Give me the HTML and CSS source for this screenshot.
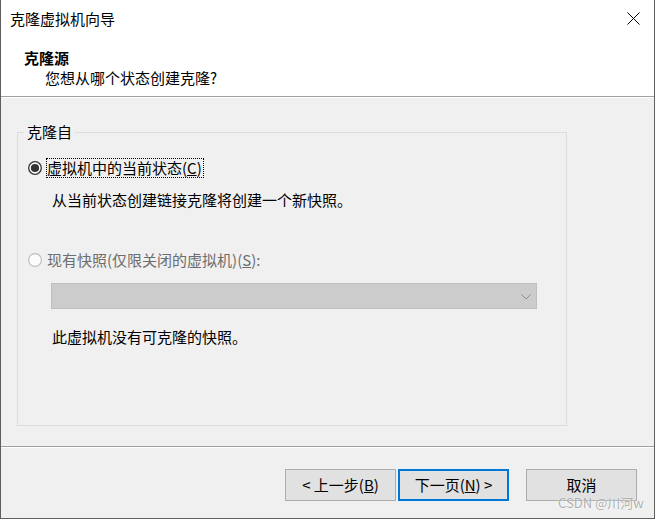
FILE: index.html
```html
<!DOCTYPE html>
<html lang="zh-CN">
<head>
    <meta charset="UTF-8">
    <title>克隆虚拟机向导</title>
    <link rel="stylesheet" href="styles.css">
</head>
<body>
    <div class="window">
        <div class="top">
            <div class="titlebar">
                <span class="title">克隆虚拟机向导</span>
                <svg class="close" width="13" height="13" viewBox="0 0 13 13">
                    <path d="M0.5 0.5 L12.5 12.5 M12.5 0.5 L0.5 12.5" stroke="#000" stroke-width="1" fill="none"/>
                </svg>
            </div>
            <div class="header">
                <div class="header-title">克隆源</div>
                <div class="header-sub">您想从哪个状态创建克隆?</div>
            </div>
        </div>
        <div class="sep"></div>

        <div class="body">
            <div class="group">
                <span class="group-title">克隆自</span>

                <div class="radio-row">
                    <svg class="radio" width="14" height="14" viewBox="0 0 14 14">
                        <circle cx="7" cy="7" r="6.3" fill="#fff" stroke="#333" stroke-width="1.3"/>
                        <circle cx="7" cy="7" r="4.1" fill="#333"/>
                    </svg>
                    <span class="radio-label focused">虚拟机中的当前状态(<u>C</u>)</span>
                </div>
                <div class="desc first-desc">从当前状态创建链接克隆将创建一个新快照。</div>

                <div class="radio-row disabled">
                    <svg class="radio" width="14" height="14" viewBox="0 0 14 14">
                        <circle cx="7" cy="7" r="6.4" fill="#fcfcfc" stroke="#bcbcbc" stroke-width="1.1"/>
                    </svg>
                    <span class="radio-label">现有快照(仅限关闭的虚拟机)(<u>S</u>):</span>
                </div>
                <div class="combo">
                    <svg class="chevron" width="10" height="6" viewBox="0 0 10 6">
                        <polyline points="0.5,0.5 5,5 9.5,0.5" stroke="#8c8c8c" stroke-width="1" fill="none"/>
                    </svg>
                </div>
                <div class="desc last-desc">此虚拟机没有可克隆的快照。</div>
            </div>
        </div>
        <div class="sep"></div>

        <div class="buttons">
            <button class="btn">&lt; 上一步(<u>B</u>)</button>
            <button class="btn default">下一页(<u>N</u>) &gt;</button>
            <button class="btn cancel">取消</button>
        </div>

        <span class="watermark">CSDN @川河w</span>
    </div>
</body>
</html>
```

FILE: styles.css
```css
/* page + window frame */
body {
    margin: 0;
    background: #f0f0f0;
    font-family: "Noto Sans CJK SC", "Liberation Sans", sans-serif;
    font-size: 15px;
    color: #000;
}

.window {
    position: relative;
    width: 655px;
    height: 519px;
    box-sizing: border-box;
    border-left: 1px solid #5f5f5f;
    border-right: 1px solid #5f5f5f;
    border-bottom: 1px solid #5f5f5f;
    background: #f0f0f0;
    display: flex;
    flex-direction: column;
}

/* white top area: title bar + wizard header */
.top {
    background: #fff;
}
.titlebar {
    height: 30px;
    box-sizing: border-box;
    padding: 9px 14px 0 9px;
    display: flex;
    justify-content: space-between;
    align-items: flex-start;
    line-height: 20px;
}
.close {
    margin-top: 3px;
}
.header {
    height: 66px;
    box-sizing: border-box;
    padding: 18px 0 0 23px;
    line-height: 20px;
}
.header-title {
    font-weight: bold;
}
.header-sub {
    margin-left: 21px;
}

.sep {
    border-top: 1px solid #a0a0a0;
    border-bottom: 1px solid #fff;
}

/* group box */
.body {
    padding: 34px 0 20px 16px;
}
.group {
    width: 550px;
    height: 294px;
    box-sizing: border-box;
    border: 1px solid #dcdcdc;
    display: flex;
    flex-direction: column;
    align-items: flex-start;
    line-height: 20px;
}
.group-title {
    margin: -11px 0 0 6px;
    padding: 0 3px;
    background: #f0f0f0;
}

.radio-row {
    display: flex;
    align-items: center;
    margin: 16px 0 0 10px;
}
.radio {
    display: block;
    flex-shrink: 0;
    margin-right: 4px;
}
.radio-label {
    line-height: 18px;
    border: 1px dotted transparent;
    padding-right: 1px;
}
.radio-label.focused {
    border-color: #000;
}
.radio-row.disabled {
    margin-top: 40px;
    color: #6d6d6d;
}

.desc {
    margin-left: 34px;
}
.first-desc {
    margin-top: 12px;
}
.last-desc {
    margin-top: 18px;
}

.combo {
    margin: 13px 0 0 33px;
    width: 486px;
    height: 26px;
    box-sizing: border-box;
    border: 1px solid #bfbfbf;
    background: #cccccc;
    display: flex;
    justify-content: flex-end;
    align-items: center;
}
.chevron {
    margin-right: 5px;
    margin-top: 1px;
}

/* bottom buttons */
.buttons {
    flex: 1;
    display: flex;
    justify-content: flex-end;
    align-items: flex-start;
    padding: 21px 17px 0 0;
}
.btn {
    width: 111px;
    height: 32px;
    box-sizing: border-box;
    margin: 0;
    padding: 0;
    background: #e1e1e1;
    border: 1px solid #adadad;
    font-family: inherit;
    font-size: 15px;
    color: #000;
    line-height: 20px;
}
.btn.default {
    margin-left: 2px;
    border: 2px solid #0078d7;
}
.btn.cancel {
    margin-left: 17px;
}

.watermark {
    position: absolute;
    left: 557px;
    top: 494px;
    font-size: 13px;
    line-height: 18px;
    color: rgba(150, 150, 150, 0.75);
    text-shadow: 0 0 2px #fff;
}
```
